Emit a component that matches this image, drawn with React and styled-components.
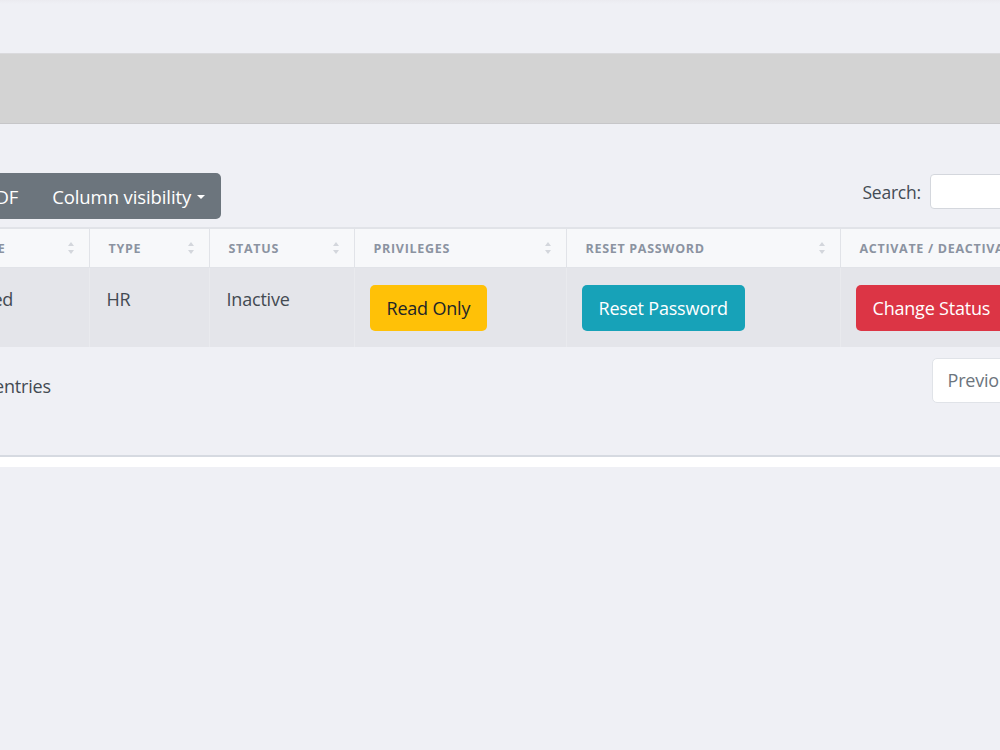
import React from "react";
import styled, { createGlobalStyle } from "styled-components";

const Global = createGlobalStyle`
  html, body { margin: 0; padding: 0; }
  body {
    background: #eff0f5;
    font-family: "Open Sans", "Noto Sans", sans-serif;
    overflow: hidden;
    width: 1000px;
    height: 750px;
  }
`;

const Page = styled.div`
  display: flex;
  flex-direction: column;
  width: 1000px;
  min-height: 750px;
`;

const TopSpace = styled.div`
  height: 53px;
  background: linear-gradient(#ebebf0 0px, #eff0f5 4px);
`;

const TitleBar = styled.div`
  height: 69px;
  background: #d3d3d3;
  border-top: 1px solid #dadadd;
  border-bottom: 1px solid #c6c6c8;
`;

const Card = styled.div`
  margin-left: -54px;
  width: 1200px;
  padding: 49px 0 52px;
  border-bottom: 2px solid #d6dae1;
  display: flex;
  flex-direction: column;
`;

const WhiteStrip = styled.div`
  height: 10px;
  background: #ffffff;
`;

const Toolbar = styled.div`
  display: flex;
  justify-content: space-between;
  align-items: flex-start;
  height: 46px;
  margin-bottom: 8px;
`;

const BtnGroup = styled.div`
  display: flex;
  background: #6c757d;
  border-radius: 5px;
  height: 46px;
  margin-left: -53px;
`;

const GroupBtn = styled.div`
  display: flex;
  align-items: center;
  gap: 6px;
  padding: ${(p) => (p.$wide ? "0 16px 0 18px" : "0 16px")};
  color: #ffffff;
  font-size: 18.5px;
  letter-spacing: -0.1px;
  white-space: nowrap;
`;

const Caret = styled.span`
  display: inline-block;
  width: 0;
  height: 0;
  border-left: 4px solid transparent;
  border-right: 4px solid transparent;
  border-top: 4px solid #ffffff;
  margin-top: 2px;
`;

const SearchWrap = styled.label`
  display: flex;
  align-items: center;
  gap: 9px;
  margin-top: 1px;
  font-size: 17.5px;
  color: #444b54;
  letter-spacing: -0.2px;
`;

const SearchInput = styled.div`
  width: 214px;
  height: 33px;
  background: #ffffff;
  border: 1px solid #d4d7dd;
  border-radius: 4px;
`;

const Table = styled.table`
  width: 1200px;
  table-layout: fixed;
  border-collapse: collapse;
`;

const Th = styled.th`
  position: relative;
  height: 38px;
  padding: 0 20px 0 19px;
  text-align: left;
  background: #f7f8fa;
  border-top: 2px solid #e1e3e8;
  border-right: 1px solid #e1e3e8;
  border-bottom: 1px solid #e1e3e8;
  color: #8b93a1;
  font-size: 12.5px;
  font-weight: 700;
  letter-spacing: 0.7px;
  text-transform: uppercase;
  white-space: nowrap;
  overflow: hidden;
`;

const SortIcon = styled.svg`
  position: absolute;
  right: 15px;
  top: 13px;
`;

const Td = styled.td`
  vertical-align: top;
  height: 79px;
  box-sizing: border-box;
  padding: 17px 20px 0 ${(p) => (p.$btn ? "15px" : "17px")};
  background: #e4e5ea;
  border-right: 1px solid #e9eaee;
  color: #434a52;
  font-size: 18px;
  line-height: 28px;
  letter-spacing: -0.2px;
  white-space: nowrap;
`;

const ActionBtn = styled.div`
  display: inline-flex;
  align-items: center;
  height: 46px;
  padding: 0 17px;
  border-radius: 5px;
  background: ${(p) => p.$bg};
  color: ${(p) => p.$fg};
  font-size: 18px;
  letter-spacing: -0.2px;
`;

const Footer = styled.div`
  display: flex;
  justify-content: space-between;
  align-items: flex-start;
  margin-top: 11px;
`;

const Info = styled.div`
  padding-top: 14px;
  font-size: 18px;
  line-height: 28px;
  color: #434a52;
  letter-spacing: -0.2px;
  margin-left: -112px;
`;

const Pager = styled.div`
  display: flex;
  box-sizing: border-box;
  height: 45px;
  background: #ffffff;
  border: 1px solid #e0e3e8;
  border-radius: 5px;
`;

const PageItem = styled.div`
  display: flex;
  align-items: center;
  padding: 0 15px;
  font-size: 18px;
  color: ${(p) => (p.$active ? "#ffffff" : "#6c757d")};
  background: ${(p) => (p.$active ? "#007bff" : "transparent")};
  border-right: 1px solid #e0e3e8;
  letter-spacing: -0.2px;
`;

const Sort = () => (
  <SortIcon width="6" height="12" viewBox="0 0 6 12">
    <path d="M3 0 L6 4 L0 4 Z" fill="#d3d6dc" />
    <path d="M3 12 L6 8 L0 8 Z" fill="#d3d6dc" />
  </SortIcon>
);

const columns = [
  { label: "Name", w: 143 },
  { label: "Type", w: 120 },
  { label: "Status", w: 145 },
  { label: "Privileges", w: 212 },
  { label: "Reset Password", w: 274 },
  { label: "Activate / Deactivate", w: 306 },
];

export default function App() {
  return (
    <>
      <Global />
      <Page>
        <TopSpace />
        <TitleBar />
        <Card>
          <Toolbar>
            <BtnGroup>
              <GroupBtn>Excel</GroupBtn>
              <GroupBtn>PDF</GroupBtn>
              <GroupBtn $wide>
                Column visibility <Caret />
              </GroupBtn>
            </BtnGroup>
            <SearchWrap>
              Search:
              <SearchInput />
            </SearchWrap>
          </Toolbar>
          <Table>
            <colgroup>
              {columns.map((c) => (
                <col key={c.label} style={{ width: c.w }} />
              ))}
            </colgroup>
            <thead>
              <tr>
                {columns.map((c) => (
                  <Th key={c.label}>
                    {c.label}
                    <Sort />
                  </Th>
                ))}
              </tr>
            </thead>
            <tbody>
              <tr>
                <Td>Saeed</Td>
                <Td>HR</Td>
                <Td>Inactive</Td>
                <Td $btn>
                  <ActionBtn $bg="#ffc107" $fg="#212529">Read Only</ActionBtn>
                </Td>
                <Td $btn>
                  <ActionBtn $bg="#17a2b8" $fg="#ffffff">Reset Password</ActionBtn>
                </Td>
                <Td $btn>
                  <ActionBtn $bg="#dc3545" $fg="#ffffff">Change Status</ActionBtn>
                </Td>
              </tr>
            </tbody>
          </Table>
          <Footer>
            <Info>Showing 1 to 1 of 1 entries</Info>
            <Pager>
              <PageItem>Previous</PageItem>
              <PageItem $active>1</PageItem>
              <PageItem>Next</PageItem>
            </Pager>
          </Footer>
        </Card>
        <WhiteStrip />
      </Page>
    </>
  );
}
